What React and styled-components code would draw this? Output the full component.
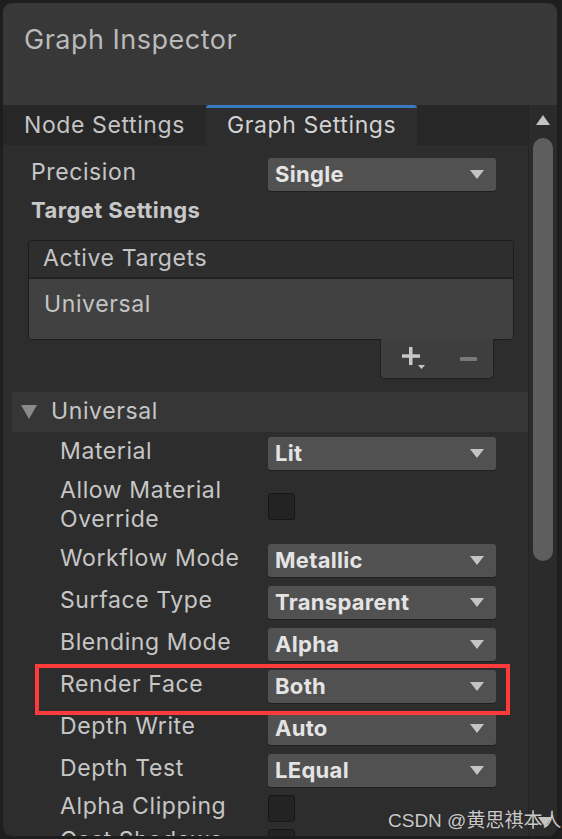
import React from "react";
import styled, { createGlobalStyle } from "styled-components";

const Global = createGlobalStyle`
  html, body { margin: 0; padding: 0; background: #1e1e1e; }
  body { font-family: Inter, "Noto Sans", sans-serif; }
  * { box-sizing: border-box; }
`;

const Page = styled.div`
  position: relative;
  width: 562px;
  height: 839px;
  overflow: hidden;
  padding: 3px 5px 3px 3px;
`;

const Panel = styled.div`
  width: 554px;
  height: 833px;
  border-radius: 9px;
  overflow: hidden;
  background: #2d2d2d;
  display: flex;
  flex-direction: column;
`;

const Header = styled.div`
  height: 102px;
  background: #383838;
  padding: 20px 0 0 21px;
  flex: none;
`;

const Title = styled.div`
  font-size: 27px;
  color: #bababa;
  letter-spacing: 0.5px;
`;

const Body = styled.div`
  flex: 1;
  display: flex;
  min-height: 0;
`;

const Content = styled.div`
  flex: 1;
  display: flex;
  flex-direction: column;
  overflow: hidden;
`;

const TabBar = styled.div`
  height: 40px;
  background: #272727;
  display: flex;
  flex: none;
`;

const Tab = styled.div`
  height: 40px;
  padding: 0 21px 3px;
  display: flex;
  align-items: center;
  font-size: 23px;
  letter-spacing: 0.6px;
  color: ${(p) => (p.$active ? "#d2d2d2" : "#c4c4c4")};
  background: ${(p) => (p.$active ? "#2d2d2d" : "transparent")};
  border-top: 3px solid ${(p) => (p.$active ? "#3a79bf" : "transparent")};
  border-radius: 3px 3px 0 0;
`;

const Row = styled.div`
  display: flex;
  align-items: center;
  min-height: ${(p) => p.$h || 42}px;
  padding-left: ${(p) => p.$indent}px;
  padding-top: ${(p) => p.$top || 0}px;
  flex: none;
`;

const Label = styled.div`
  width: ${(p) => 265 - p.$indent}px;
  flex: none;
  font-size: 23px;
  line-height: 29px;
  letter-spacing: 0.6px;
  color: #c6c6c6;
  padding-bottom: 4px;
`;

const Heading = styled.div`
  font-size: 22px;
  font-weight: 700;
  letter-spacing: 0.4px;
  color: #c8c8c8;
  padding: 2px 0 0 28px;
  height: 35px;
  flex: none;
`;

const Dropdown = styled.div`
  width: 228px;
  height: 33px;
  background: #515151;
  border-radius: 3px;
  box-shadow: 0 1px 0 #202020;
  display: flex;
  align-items: center;
  justify-content: space-between;
  padding: 0 12px 0 7px;
  font-size: 22px;
  font-weight: 700;
  color: #e4e4e4;
  letter-spacing: 0.3px;
`;

const Arrow = styled.span`
  width: 0;
  height: 0;
  border-left: 7px solid transparent;
  border-right: 7px solid transparent;
  border-top: 9px solid #c4c4c4;
`;

const Check = styled.div`
  width: 27px;
  height: 27px;
  background: #232323;
  border: 1px solid #171717;
  border-radius: 3px;
  display: flex;
  align-items: center;
  justify-content: center;
`;

const List = styled.div`
  margin: 10px 0 0 25px;
  width: 486px;
  flex: none;
`;

const ListBox = styled.div`
  border: 1px solid #1c1c1c;
  border-radius: 4px;
  overflow: hidden;
`;

const ListHeader = styled.div`
  height: 38px;
  background: #2e2e2e;
  border-bottom: 2px solid #222;
  padding: 3px 0 0 14px;
  font-size: 23px;
  letter-spacing: 0.6px;
  color: #c4c4c4;
`;

const ListItem = styled.div`
  height: 60px;
  background: #414141;
  padding: 11px 0 0 15px;
  font-size: 23px;
  letter-spacing: 0.6px;
  color: #c4c4c4;
`;

const ListFooter = styled.div`
  margin: -1px 0 0 352px;
  width: 114px;
  height: 40px;
  background: #3e3e3e;
  border: 1px solid #1f1f1f;
  border-top: none;
  border-radius: 0 0 5px 5px;
  display: flex;
  align-items: center;
  padding: 0 0 0 21px;
  gap: 32px;
`;

const Foldout = styled.div`
  margin: 13px 0 0 9px;
  height: 40px;
  background: #363636;
  display: flex;
  align-items: center;
  padding: 0 0 3px 9px;
  gap: 14px;
  font-size: 23px;
  letter-spacing: 0.6px;
  color: #c6c6c6;
  flex: none;
`;

const FoldArrow = styled.span`
  width: 0;
  height: 0;
  border-left: 8px solid transparent;
  border-right: 8px solid transparent;
  border-top: 14px solid #8a8a8a;
  margin-top: 3px;
`;

const Scrollbar = styled.div`
  width: 29px;
  flex: none;
  background: #2b2b2b;
  border-left: 1px solid #242424;
  display: flex;
  flex-direction: column;
  align-items: center;
  padding-top: 10px;
  gap: 13px;
`;

const UpArrow = styled.span`
  width: 0;
  height: 0;
  border-left: 7px solid transparent;
  border-right: 7px solid transparent;
  border-bottom: 10px solid #c4c4c4;
`;

const Thumb = styled.div`
  width: 20px;
  height: 423px;
  border-radius: 10px;
  background: #5e5e5e;
`;

const Highlight = styled.div`
  position: absolute;
  left: 35px;
  top: 664px;
  width: 475px;
  height: 51px;
  border: 4px solid #fe3a3a;
`;

const Watermark = styled.div`
  position: absolute;
  left: 388px;
  top: 805px;
  font-family: "Liberation Sans", "Noto Sans CJK SC", sans-serif;
  font-size: 19px;
  color: rgba(235, 235, 235, 0.85);
  text-shadow: 0 0 1px rgba(0,0,0,0.5);
`;

const DownArrow = styled.span`
  position: absolute;
  left: 538px;
  top: 817px;
  width: 0;
  height: 0;
  border-left: 7px solid transparent;
  border-right: 7px solid transparent;
  border-top: 10px solid #c4c4c4;
`;

const Plus = () => (
  <svg width="26" height="26" viewBox="0 0 26 26">
    <rect x="7" y="1" width="3.5" height="18" fill="#c8c8c8" />
    <rect x="0" y="8.3" width="18" height="3.5" fill="#c8c8c8" />
    <path d="M16 19h7l-3.5 4z" fill="#c8c8c8" />
  </svg>
);

const Minus = () => (
  <svg width="18" height="8" viewBox="0 0 18 8">
    <rect x="0" y="2" width="17" height="4" rx="1" fill="#7a7a7a" />
  </svg>
);

const Tick = () => (
  <svg width="18" height="18" viewBox="0 0 18 18">
    <path d="M3 9l4 4 8-9" stroke="#d0d0d0" strokeWidth="3" fill="none" />
  </svg>
);

const DropRow = ({ label, value, indent, h, top }) => (
  <Row $indent={indent} $h={h} $top={top}>
    <Label $indent={indent}>{label}</Label>
    <Dropdown>
      {value}
      <Arrow />
    </Dropdown>
  </Row>
);

const CheckRow = ({ label, indent, h, checked }) => (
  <Row $indent={indent} $h={h}>
    <Label $indent={indent}>{label}</Label>
    <Check>{checked && <Tick />}</Check>
  </Row>
);

export default function App() {
  return (
    <Page>
      <Global />
      <Panel>
        <Header>
          <Title>Graph Inspector</Title>
        </Header>
        <Body>
          <Content>
            <TabBar>
              <Tab>Node Settings</Tab>
              <Tab $active>Graph Settings</Tab>
            </TabBar>
            <DropRow indent={28} h={50} top={8} label="Precision" value="Single" />
            <Heading>Target Settings</Heading>
            <List>
              <ListBox>
                <ListHeader>Active Targets</ListHeader>
                <ListItem>Universal</ListItem>
              </ListBox>
              <ListFooter>
                <Plus />
                <Minus />
              </ListFooter>
            </List>
            <Foldout>
              <FoldArrow />
              Universal
            </Foldout>
            <DropRow indent={57} label="Material" value="Lit" />
            <CheckRow indent={57} h={65} label={<>Allow Material<br />Override</>} />
            <DropRow indent={57} label="Workflow Mode" value="Metallic" />
            <DropRow indent={57} label="Surface Type" value="Transparent" />
            <DropRow indent={57} label="Blending Mode" value="Alpha" />
            <DropRow indent={57} label="Render Face" value="Both" />
            <DropRow indent={57} label="Depth Write" value="Auto" />
            <DropRow indent={57} label="Depth Test" value="LEqual" />
            <CheckRow indent={57} h={34} label="Alpha Clipping" />
            <CheckRow indent={57} h={34} label="Cast Shadows" checked />
          </Content>
          <Scrollbar>
            <UpArrow />
            <Thumb />
          </Scrollbar>
        </Body>
      </Panel>
      <Highlight />
      <Watermark>CSDN @黄思祺本人</Watermark>
      <DownArrow />
    </Page>
  );
}
